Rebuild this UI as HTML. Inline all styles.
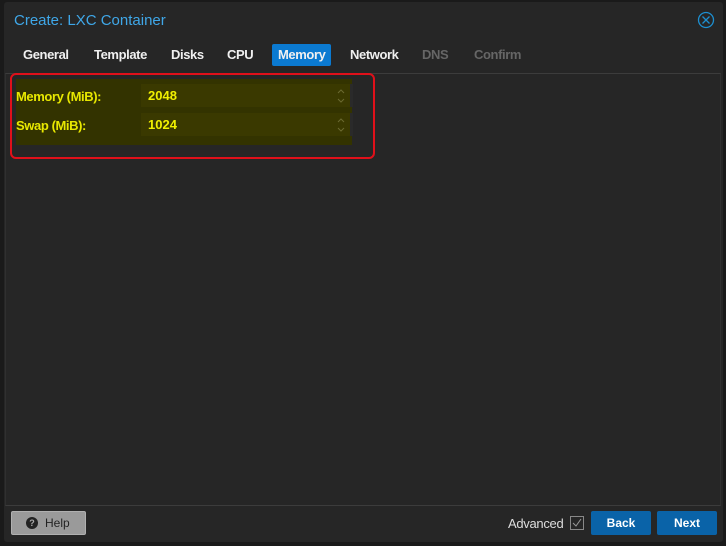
<!DOCTYPE html>
<html><head><style>
body{margin:0;width:726px;height:546px;background:#1a1a1a;font-family:"Liberation Sans",sans-serif;position:relative;overflow:hidden}
.win{position:absolute;left:4px;top:2px;width:719px;height:540px;background:#262626;border-radius:3px}
.abs{position:absolute}
.title{left:14px;top:12px;color:#3fa7e8;font-size:15px}
.tab{position:absolute;top:44px;height:22px;line-height:22px;font-size:13px;font-weight:bold;color:#f0f0f0;padding:0 7px;letter-spacing:-0.4px}
.panel{left:5px;top:73px;width:714px;height:431px;border-top:1px solid #3c3c3c;border-bottom:1px solid #3c3c3c;border-left:1px solid #303030;border-right:1px solid #303030}
.lbl{color:#e8e800;font-size:13px;font-weight:bold;letter-spacing:-0.4px}
.fld{left:141px;width:209px;height:23px;background:#3a3900;border-right:3px solid #2a2a2a}
.val{color:#f0f000;font-size:13px;font-weight:bold;position:absolute;left:7px;top:4px}
.spin{position:absolute;right:4px;top:3px}
.btn{position:absolute;top:511px;height:24px;line-height:24px;color:#fff;font-size:12px;font-weight:bold;text-align:center;background:#0a63a8;border-radius:2px}
</style></head><body>
<div class="win"></div>
<div class="abs title">Create: LXC Container</div>
<svg class="abs" style="left:697px;top:11px" width="18" height="18"><circle cx="9" cy="9" r="7.5" fill="none" stroke="#1d8fd0" stroke-width="1.3"/><path d="M5.5 5.5L12.5 12.5M12.5 5.5L5.5 12.5" stroke="#1d8fd0" stroke-width="1.3"/></svg>
<div class="tab" style="left:16px">General</div>
<div class="tab" style="left:87px">Template</div>
<div class="tab" style="left:164px">Disks</div>
<div class="tab" style="left:220px">CPU</div>
<div class="tab" style="left:272px;background:#0b7ad1;border-radius:2px;padding:0 6px">Memory</div>
<div class="tab" style="left:343px">Network</div>
<div class="tab" style="left:415px;color:#666">DNS</div>
<div class="tab" style="left:467px;color:#666">Confirm</div>
<div class="abs panel"></div>
<div class="abs" style="left:16px;top:79px;width:336px;height:66px;background:#333300"></div>
<div class="abs lbl" style="left:16px;top:89px">Memory (MiB):</div>
<div class="abs fld" style="top:84px"><span class="val">2048</span><svg class="spin" width="10" height="18"><path d="M2 6L5 3L8 6M2 12L5 15L8 12" fill="none" stroke="#6b6a30" stroke-width="1"/></svg></div>
<div class="abs lbl" style="left:16px;top:118px">Swap (MiB):</div>
<div class="abs fld" style="top:113px"><span class="val">1024</span><svg class="spin" width="10" height="18"><path d="M2 6L5 3L8 6M2 12L5 15L8 12" fill="none" stroke="#6b6a30" stroke-width="1"/></svg></div>
<div class="abs" style="left:10px;top:73px;width:361px;height:82px;border:2px solid #e0101a;border-radius:6px"></div>
<div class="abs" style="left:11px;top:511px;width:73px;height:22px;background:#9a9a9a;border:1px solid #b0b0b0;border-radius:2px;color:#222;font-size:12px;line-height:22px"><span style="position:absolute;left:14px;top:5px;width:12px;height:12px;border-radius:6px;background:#222;color:#aaa;font-size:9px;line-height:12px;text-align:center;font-weight:bold">?</span><span style="position:absolute;left:33px">Help</span></div>
<div class="abs" style="left:508px;top:516px;color:#ddd;font-size:13px;letter-spacing:-0.3px">Advanced</div>
<svg class="abs" style="left:570px;top:516px" width="14" height="14"><rect x="0.5" y="0.5" width="13" height="13" fill="none" stroke="#888"/><path d="M3 7l3 3 5-7" fill="none" stroke="#999" stroke-width="1"/></svg>
<div class="btn" style="left:591px;width:60px">Back</div>
<div class="btn" style="left:657px;width:60px">Next</div>
</body></html>
